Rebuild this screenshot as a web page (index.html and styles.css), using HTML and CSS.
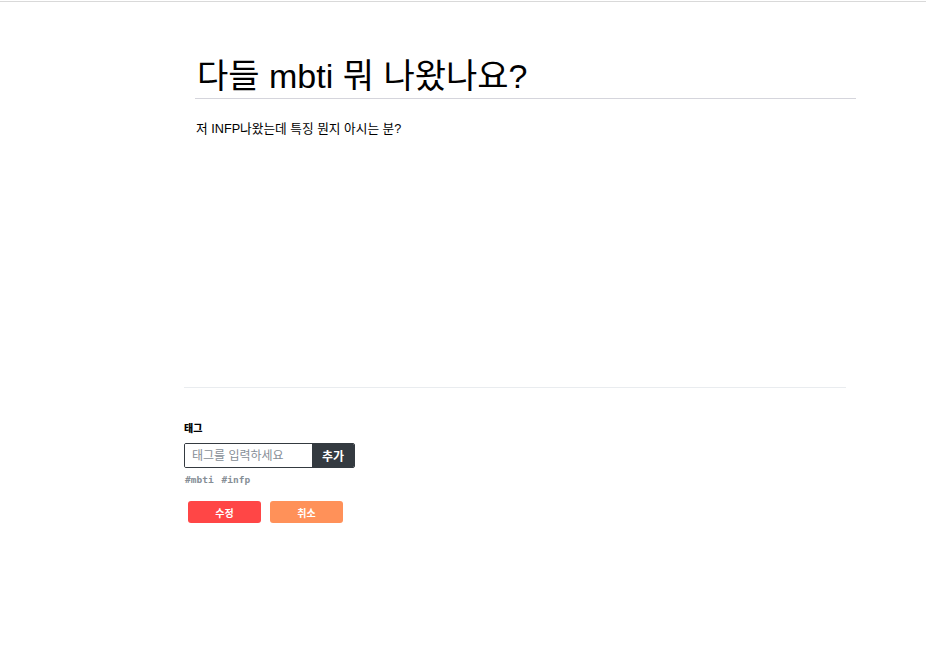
FILE: index.html
```html
<!DOCTYPE html>
<html lang="ko">
<head>
<meta charset="utf-8">
<link rel="stylesheet" href="styles.css">
</head>
<body>
<div class="topbar"></div>
<main class="editor">
  <div class="post">
    <h1 class="title">다들 mbti 뭐 나왔나요?</h1>
    <p class="content">저 INFP나왔는데 특징 뭔지 아시는 분?</p>
  </div>
  <div class="tags">
    <h4 class="tags-label">태그</h4>
    <form class="tag-form">
      <input class="tag-input" placeholder="태그를 입력하세요">
      <button class="tag-add" type="button">추가</button>
    </form>
    <div class="tag-list">
      <span class="tag">#mbti</span>
      <span class="tag">#infp</span>
    </div>
  </div>
  <div class="actions">
    <button class="btn btn-edit">수정</button>
    <button class="btn btn-cancel">취소</button>
  </div>
</main>
</body>
</html>
```
FILE: styles.css
```css
html, body {
  margin: 0;
  padding: 0;
  background: #fff;
  font-family: "Liberation Sans", "Noto Sans CJK KR", sans-serif;
  color: #000;
}
.topbar {
  height: 1px;
  border-bottom: 1px solid #d9d9d9;
}
.editor {
  width: 662px;
  margin-left: 184px;
}
.post {
  height: 386px;
  border-bottom: 1px solid #e9ecef;
  padding-left: 11px;
  box-sizing: border-box;
}
.title {
  margin: 0;
  padding-top: 53px;
  padding-left: 2px;
  font-size: 34px;
  font-weight: normal;
  line-height: 43px;
  border-bottom: 1px solid #d5d5dc;
  margin-right: -10px;
}
.content {
  margin: 22px 0 0 1px;
  font-size: 12.7px;
  line-height: 16px;
}
.tags {
  padding-top: 35px;
}
.tags-label {
  margin: 0 0 8px;
  font-size: 10px;
  line-height: 12px;
  font-weight: 900;
  color: #000;
}
.tag-form {
  display: flex;
  width: 171px;
  height: 25px;
  border: 1px solid #343a40;
  border-radius: 2px;
  box-sizing: border-box;
  overflow: hidden;
  margin: 0;
}
.tag-input {
  width: 127px;
  border: none;
  outline: none;
  padding: 0 0 0 7px;
  font-size: 12px;
  font-family: inherit;
  box-sizing: border-box;
}
.tag-input::placeholder {
  color: #868e96;
}
.tag-add {
  flex: 1;
  border: none;
  background: #343a40;
  color: #fff;
  font-weight: bold;
  font-size: 12px;
  font-family: inherit;
  padding: 0;
}
.tag-list {
  display: flex;
  gap: 8px;
  margin-top: 6px;
  margin-left: 1px;
  font-size: 9.5px;
  line-height: 12px;
  font-weight: bold;
  color: #868e96;
  font-family: "DejaVu Sans Mono", "Noto Sans CJK KR", monospace;
}
.actions {
  display: flex;
  gap: 9px;
  margin-top: 15px;
  margin-left: 4px;
}
.btn {
  width: 73px;
  height: 22px;
  border: none;
  border-radius: 3px;
  color: #fff;
  font-weight: bold;
  font-size: 10px;
  font-family: inherit;
  padding: 0;
}
.btn-edit {
  background: #ff4646;
}
.btn-cancel {
  background: #ff9159;
}
```
